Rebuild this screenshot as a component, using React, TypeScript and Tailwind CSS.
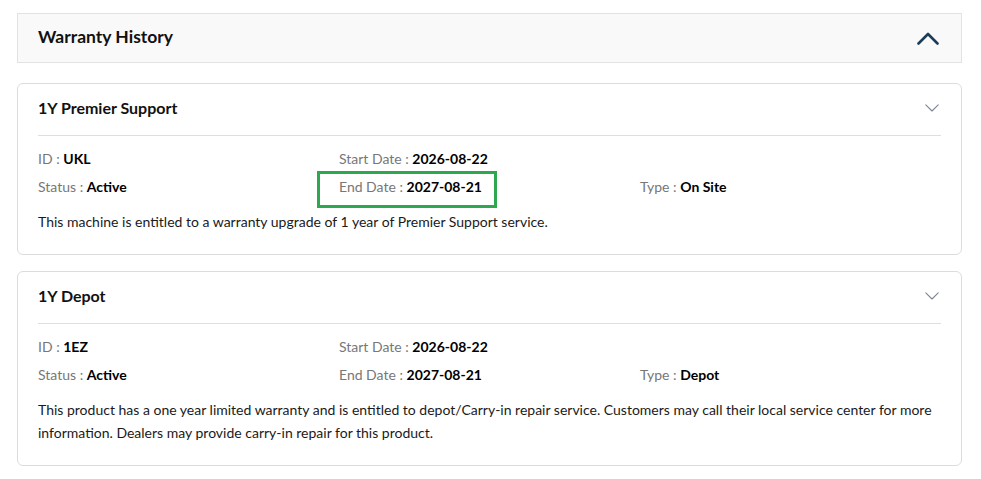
import React from "react";

type Warranty = {
  name: string;
  id: string;
  status: string;
  start: string;
  end: string;
  type: string;
  description: string;
  highlightEnd?: boolean;
};

const warranties: Warranty[] = [
  {
    name: "1Y Premier Support",
    id: "UKL",
    status: "Active",
    start: "2026-08-22",
    end: "2027-08-21",
    type: "On Site",
    description:
      "This machine is entitled to a warranty upgrade of 1 year of Premier Support service.",
    highlightEnd: true,
  },
  {
    name: "1Y Depot",
    id: "1EZ",
    status: "Active",
    start: "2026-08-22",
    end: "2027-08-21",
    type: "Depot",
    description:
      "This product has a one year limited warranty and is entitled to depot/Carry-in repair service. Customers may call their local service center for more information. Dealers may provide carry-in repair for this product.",
  },
];

function Field({ label, value }: { label: string; value: string }) {
  return (
    <span className="whitespace-nowrap">
      <span className="text-[#777777]">{label} : </span>
      <span className="font-bold text-black">{value}</span>
    </span>
  );
}

function ChevronUp() {
  return (
    <svg width="22" height="13" viewBox="0 0 22 13" fill="none">
      <path
        d="M1.5 11.5 L11 2 L20.5 11.5"
        stroke="#1c3d5a"
        strokeWidth="2.6"
        strokeLinecap="round"
        strokeLinejoin="round"
      />
    </svg>
  );
}

function ChevronDown() {
  return (
    <svg width="14" height="8" viewBox="0 0 14 8" fill="none">
      <path
        d="M0.8 0.8 L7 7 L13.2 0.8"
        stroke="#7c8596"
        strokeWidth="1.1"
        strokeLinecap="round"
        strokeLinejoin="round"
      />
    </svg>
  );
}

function WarrantyCard({ w }: { w: Warranty }) {
  return (
    <div className="rounded-[6px] border border-[#dcdcdc] bg-white px-5">
      <div className="flex items-center justify-between pt-3 pb-[15px]">
        <h3 className="text-[16px] leading-6 font-bold text-[#111111]">{w.name}</h3>
        <span className="mr-[2px] flex items-center">
          <ChevronDown />
        </span>
      </div>
      <div className="h-px bg-[#dedede]" />
      <div className="mt-[9px] grid grid-cols-3 text-[14px] leading-[28px]">
        <div>
          <Field label="ID" value={w.id} />
        </div>
        <div>
          <Field label="Start Date" value={w.start} />
        </div>
        <div />
        <div>
          <Field label="Status" value={w.status} />
        </div>
        <div className="relative">
          <Field label="End Date" value={w.end} />
          {w.highlightEnd && (
            <span className="pointer-events-none absolute -left-[22px] -top-[2px] h-[37px] w-[180px] border-[3px] border-[#2ea84f]" />
          )}
        </div>
        <div>
          <Field label="Type" value={w.type} />
        </div>
      </div>
      <p className="mt-[9px] pb-[21px] text-[14px] leading-[23px] text-[#1a1a1a]">
        {w.description}
      </p>
    </div>
  );
}

export default function App() {
  return (
    <div
      className="min-h-screen bg-white pt-[13px] pr-[19px] pl-[17px]"
      style={{ fontFamily: "Lato, 'Open Sans', sans-serif" }}
    >
      <div className="flex h-[50px] items-center justify-between border border-[#e2e2e2] bg-[#f9f9f9] pr-[22px] pl-5">
        <h2 className="-mt-[2px] text-[17.5px] font-bold text-[#111111]">Warranty History</h2>
        <ChevronUp />
      </div>
      <div className="mt-[20px] flex flex-col gap-[16px]">
        {warranties.map((w) => (
          <WarrantyCard key={w.name} w={w} />
        ))}
      </div>
    </div>
  );
}
